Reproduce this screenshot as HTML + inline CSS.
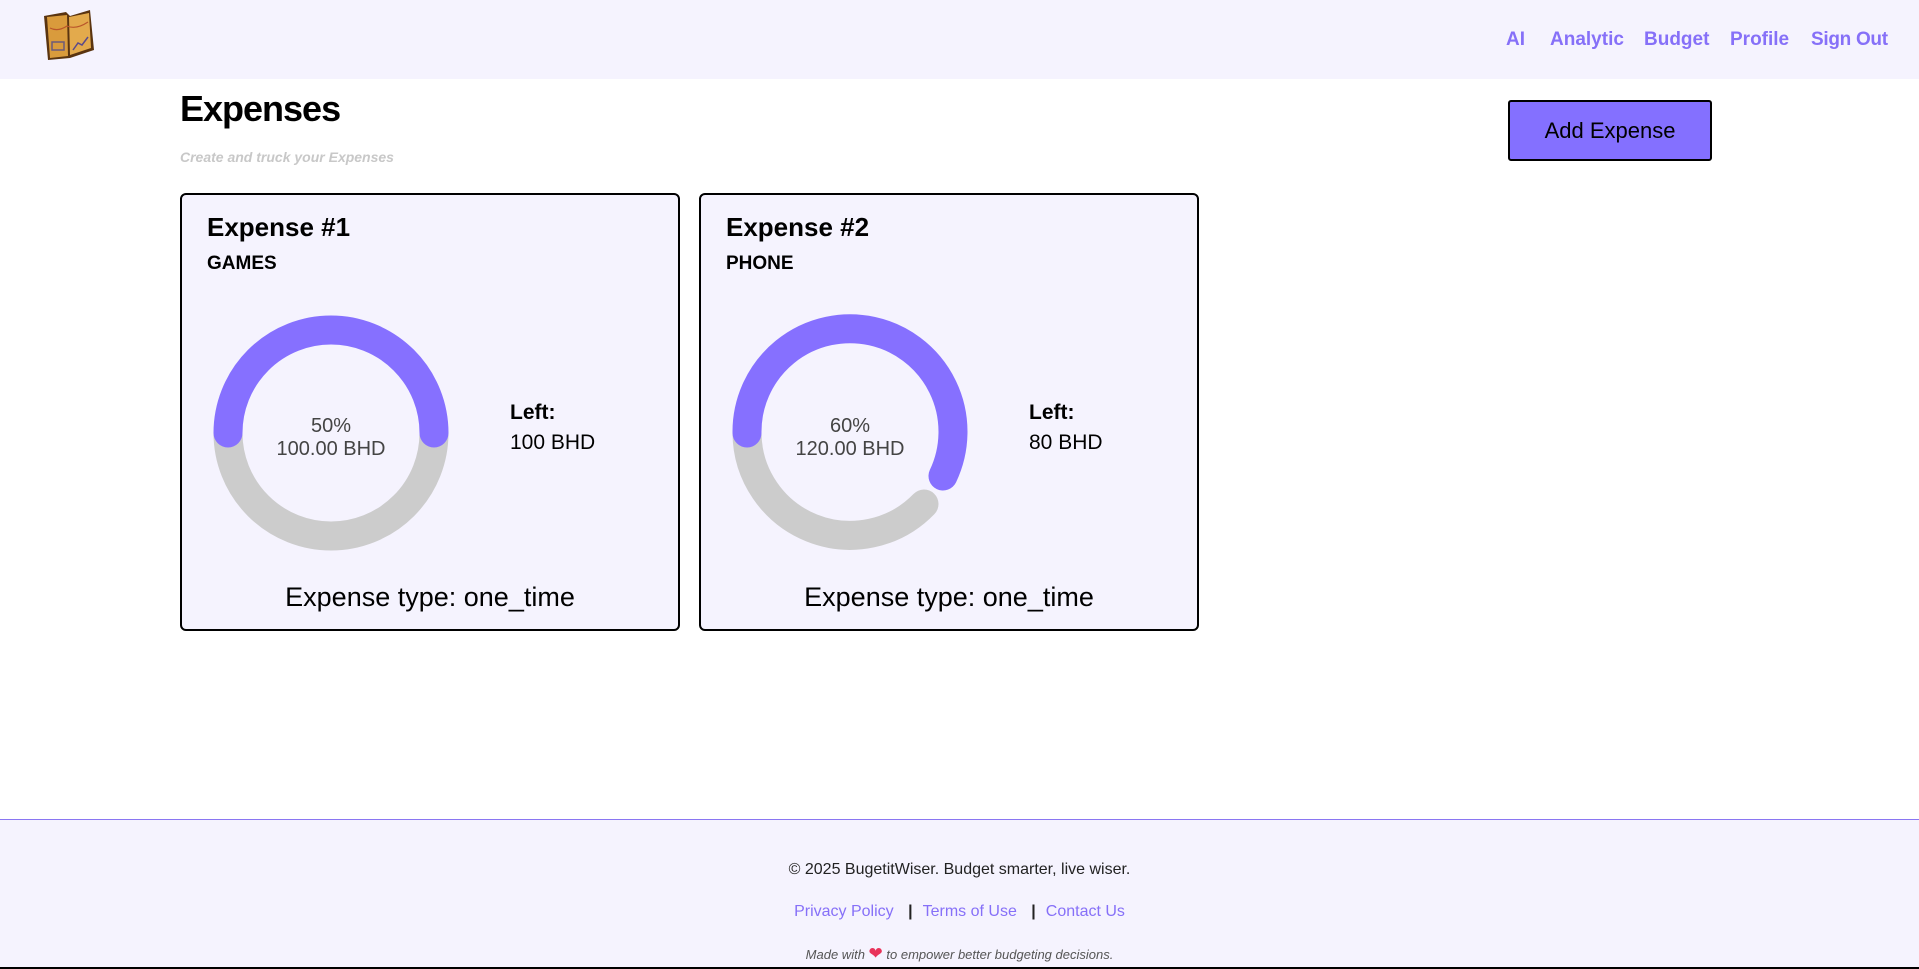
<!DOCTYPE html>
<html><head><meta charset="utf-8"><style>
*{margin:0;padding:0;box-sizing:border-box}
body{width:1919px;height:969px;overflow:hidden;background:#fff;font-family:"Liberation Sans",sans-serif;position:relative}
.hdr{position:absolute;left:0;top:0;width:1919px;height:79px;background:#f5f3fe}
.nav{position:absolute;top:29px;font-weight:bold;font-size:19px;color:#8670f8}
h1{position:absolute;left:180px;top:88px;font-size:36px;font-weight:bold;color:#000;letter-spacing:-1px}
.sub{position:absolute;left:180px;top:149px;font-size:14px;font-style:italic;font-weight:bold;color:#c8c8c8}
.btn{position:absolute;left:1508px;top:100px;width:204px;height:61px;background:#8470ff;border:2px solid #000;border-radius:3px;font-size:22px;text-align:center;line-height:57px;color:#000}
.card{position:absolute;top:193px;width:500px;height:438px;border:2px solid #000;border-radius:6px;background:#f5f3fe}
.card .t{position:absolute;left:25px;top:17px;font-size:26px;font-weight:bold}
.card .c{position:absolute;left:25px;top:58px;font-size:19px;font-weight:bold}
.card svg{position:absolute;left:0;top:0}
.card .pct{position:absolute;left:49px;width:200px;text-align:center;font-size:20px;color:#444;top:220px;line-height:23px}
.card .l{position:absolute;left:328px;top:206px;font-size:21px;font-weight:bold}
.card .v{position:absolute;left:328px;top:236px;font-size:21px}
.card .ty{position:absolute;left:0;width:496px;text-align:center;top:387px;font-size:27px}
.foot{position:absolute;left:0;top:819px;width:1919px;height:150px;background:#f5f3fe;border-top:1.5px solid #8a76f2;border-bottom:2px solid #000;text-align:center}
.f1{position:absolute;width:100%;top:41px;font-size:16px;color:#222}
.f2{position:absolute;width:100%;top:83px;font-size:16px;color:#8670f8}
.f2 b{color:#222;margin:0 10px}
.f3{position:absolute;width:100%;top:124px;font-size:13px;font-style:italic;color:#555}
</style></head><body>
<div class="hdr">
<svg style="position:absolute;left:40px;top:6px" width="56" height="56" viewBox="0 0 56 56"><path d="M4 10 L26 6 L30 10 L50 4 L54 44 L30 52 L8 54 Z" fill="#5a3410"/><path d="M7 11 L27 9 L28 50 L10 52 Z" fill="#d99b3c"/><path d="M29 11 L49 7 L51 42 L30 49 Z" fill="#e3aa4c"/><path d="M10 22 Q18 26 27 20 Q36 24 48 16" stroke="#b9552a" fill="none" stroke-width="1.2"/><rect x="12" y="36" width="12" height="8" fill="none" stroke="#6b5a7a" stroke-width="1.5"/><path d="M33 44 L38 37 L42 39 L48 31" stroke="#5b4a8a" fill="none" stroke-width="1.5"/></svg>
<div class="nav" style="left:1506px">AI</div>
<div class="nav" style="left:1550px">Analytic</div>
<div class="nav" style="left:1644px">Budget</div>
<div class="nav" style="left:1730px">Profile</div>
<div class="nav" style="left:1811px;letter-spacing:-0.3px">Sign Out</div>
</div>
<h1>Expenses</h1>
<div class="sub">Create and truck your Expenses</div>
<div class="btn">Add Expense</div>

<div class="card" style="left:180px">
<div class="t">Expense #1</div><div class="c">GAMES</div>
<svg width="500" height="438"><path d="M252 238 A103 103 0 0 1 46 238" stroke="#cccccc" stroke-width="29" fill="none" stroke-linecap="round"/><path d="M46 238 A103 103 0 0 1 252 238" stroke="#8670ff" stroke-width="29" fill="none" stroke-linecap="round"/></svg>
<div class="pct">50%<br>100.00 BHD</div>
<div class="l">Left:</div><div class="v">100 BHD</div>
<div class="ty">Expense type: one_time</div>
</div>

<div class="card" style="left:699px">
<div class="t">Expense #2</div><div class="c">PHONE</div>
<svg width="500" height="438"><path d="M223 309 A103 103 0 0 1 46 238" stroke="#cccccc" stroke-width="29" fill="none" stroke-linecap="round"/><path d="M46 238 A103 103 0 1 1 242 281" stroke="#8670ff" stroke-width="29" fill="none" stroke-linecap="round"/></svg>
<div class="pct">60%<br>120.00 BHD</div>
<div class="l">Left:</div><div class="v">80 BHD</div>
<div class="ty">Expense type: one_time</div>
</div>

<div class="foot">
<div class="f1">© 2025 BugetitWiser. Budget smarter, live wiser.</div>
<div class="f2">Privacy Policy <b>|</b>Terms of Use <b>|</b>Contact Us</div>
<div class="f3">Made with <span style="color:#e8335a;font-style:normal;font-size:17px">❤</span> to empower better budgeting decisions.</div>
</div>
</body></html>
